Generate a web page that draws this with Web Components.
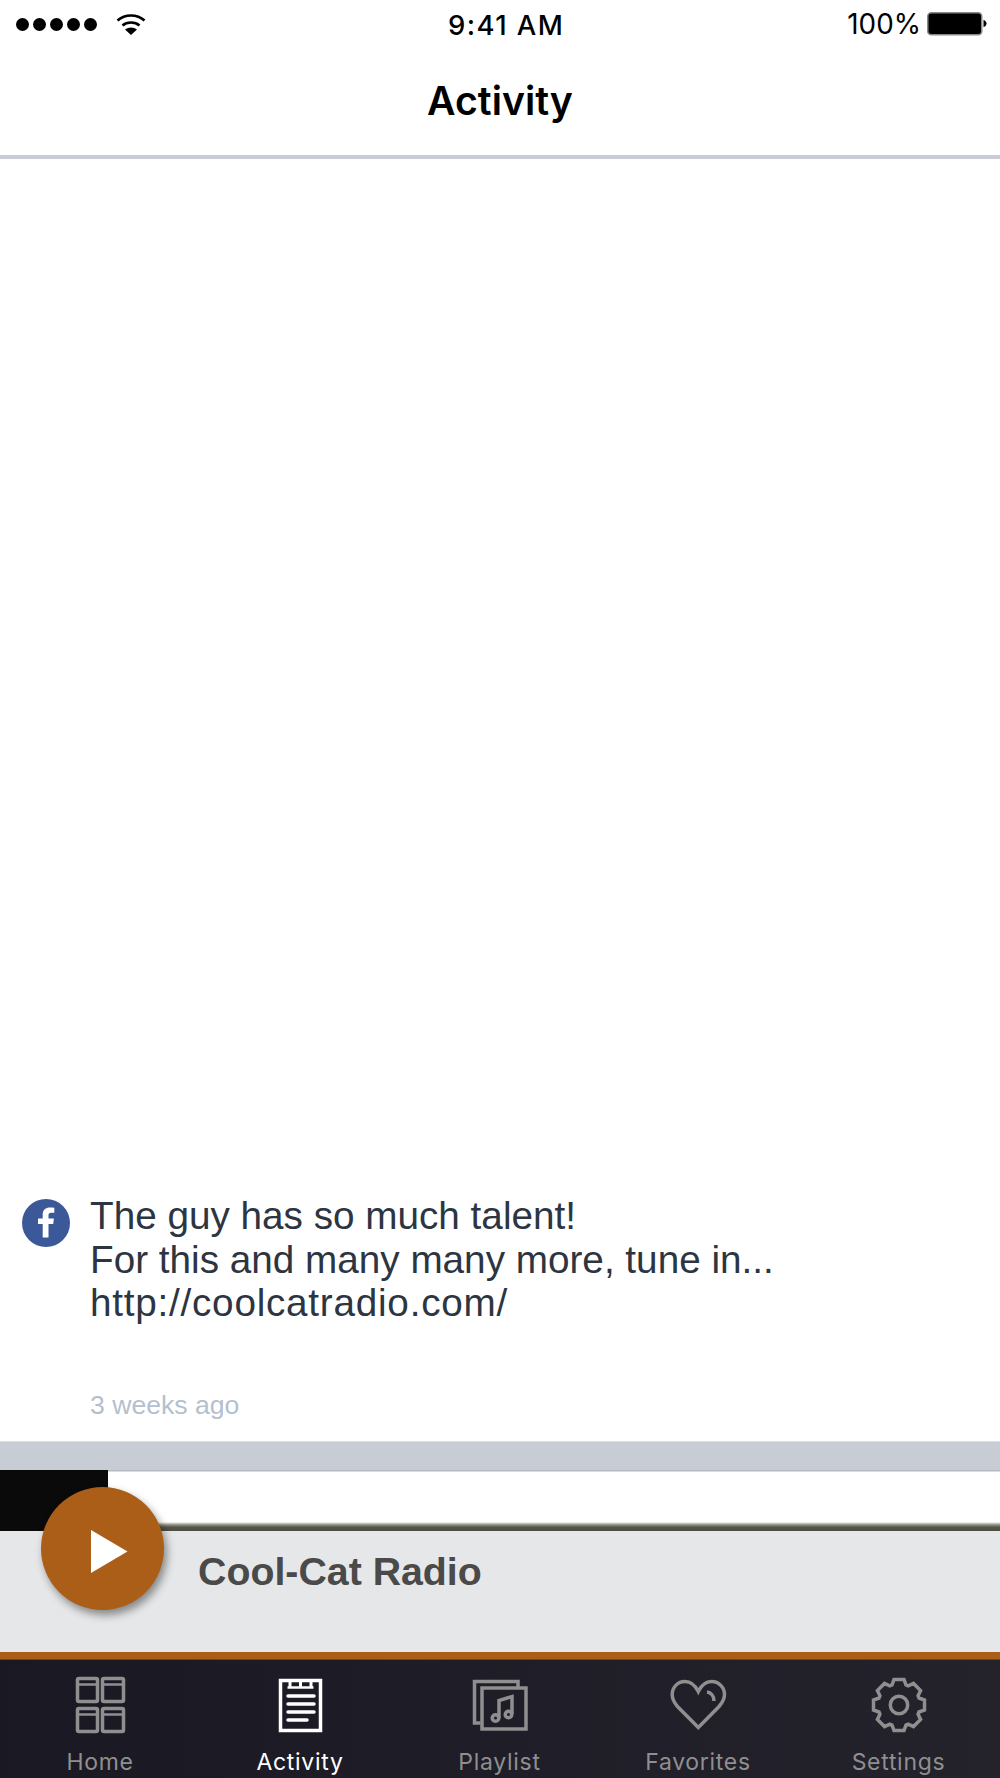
<!DOCTYPE html>
<html>
<head>
<meta charset="utf-8">
<title>Activity</title>
<style>
  html, body { margin: 0; padding: 0; background: #fff; }
  feed-post span { letter-spacing: 0.75px; }
</style>
</head>
<body>
<app-screen>
  <status-bar></status-bar>
  <nav-title>Activity</nav-title>
  <activity-feed>
    <feed-post when="3 weeks ago">The guy has so much talent!<br>For this and many many more, tune in...<br><span>http://coolcatradio.com/</span></feed-post>
  </activity-feed>
  <player-bar>Cool-Cat Radio</player-bar>
  <tab-bar>
    <tab-item icon="home">Home</tab-item>
    <tab-item icon="activity" active>Activity</tab-item>
    <tab-item icon="playlist">Playlist</tab-item>
    <tab-item icon="heart">Favorites</tab-item>
    <tab-item icon="gear">Settings</tab-item>
  </tab-bar>
</app-screen>

<script>
class AppScreen extends HTMLElement {
  constructor() {
    super();
    this.attachShadow({ mode: 'open' });
    this.shadowRoot.innerHTML = `
      <style>
        :host {
          display: flex;
          flex-direction: column;
          width: 1000px;
          height: 1778px;
          overflow: hidden;
          background: #fff;
        }
      </style>
      <slot></slot>
    `;
  }
}

class StatusBar extends HTMLElement {
  constructor() {
    super();
    this.attachShadow({ mode: 'open' });
    this.shadowRoot.innerHTML = `
      <style>
        :host {
          display: flex;
          justify-content: space-between;
          align-items: center;
          height: 48px;
          padding: 0 13px 0 16px;
          font-family: Inter, "Liberation Sans", sans-serif;
          color: #000;
        }
        .left, .right { display: flex; align-items: center; }
        .dots { display: flex; gap: 4px; }
        .dots i { width: 13px; height: 13px; border-radius: 50%; background: #000; }
        .wifi { margin-left: 19px; }
        .time { margin: 2px 0 0 19px; font-size: 27.500px; font-weight: 500; letter-spacing: 1.400px; }
        .pct { font-size: 27.800px; margin-right: 6px; }
      </style>
      <div class="left">
        <div class="dots"><i></i><i></i><i></i><i></i><i></i></div>
        <svg class="wifi" width="30" height="22" viewBox="0 0 30 22">
          <path d="M1.5 7.5C9 .8 21 .8 28.500 7.500" fill="none" stroke="#000" stroke-width="2.600"/>
          <path d="M6.500 12.500C11 8.500 19 8.500 23.500 12.500" fill="none" stroke="#000" stroke-width="2.600"/>
          <path d="M9 16.500C12.500 13.800 17.500 13.800 21 16.500L15 22Z" fill="#000"/>
        </svg>
      </div>
      <div class="time">9:41 AM</div>
      <div class="right">
        <span class="pct">100%</span>
        <svg width="60" height="24" viewBox="0 0 60 24">
          <rect x=".75" y=".75" width="54" height="22" rx="3.500" fill="#000" stroke="#8a8a8a" stroke-width="1.500"/>
          <path d="M56.500 8C58.500 8.500 59.500 10 59.500 11.500S58.500 14.500 56.500 15Z" fill="#000"/>
        </svg>
      </div>
    `;
  }
}

class NavTitle extends HTMLElement {
  constructor() {
    super();
    this.attachShadow({ mode: 'open' });
    this.shadowRoot.innerHTML = `
      <style>
        :host {
          display: flex;
          justify-content: center;
          align-items: center;
          height: 107px;
          box-sizing: content-box;
          border-bottom: 4px solid #c9ccd4;
          font: 600 39.200px Inter, "Liberation Sans", sans-serif;
          color: #000;
        }
        div { margin-top: -2px; }
      </style>
      <div><slot></slot></div>
    `;
  }
}

class ActivityFeed extends HTMLElement {
  constructor() {
    super();
    this.attachShadow({ mode: 'open' });
    this.shadowRoot.innerHTML = `
      <style>
        :host {
          flex: 1;
          display: flex;
          flex-direction: column;
          justify-content: flex-end;
          background: #fff;
        }
      </style>
      <slot></slot>
    `;
  }
}

class FeedPost extends HTMLElement {
  constructor() {
    super();
    this.attachShadow({ mode: 'open' });
    this.shadowRoot.innerHTML = `
      <style>
        :host {
          display: flex;
          gap: 20px;
          padding: 0 22px 20px 22px;
          font-family: "Liberation Sans", Arial, sans-serif;
        }
        .fb { flex: none; width: 48px; height: 48px; margin-top: 4px; }
        .text { margin-top: -1px; font-size: 38.700px; line-height: 43.700px; color: #2c3541; }
        .when { margin-top: 64px; font-size: 26.600px; line-height: 32px; color: #b4bfcf; }
      </style>
      <svg class="fb" viewBox="0 0 48 48">
        <circle cx="24" cy="24" r="24" fill="#3b5998"/>
        <path d="M26.500 38.500V25H31.200L31.900 19.500H26.500V16.300C26.500 14.700 27 13.700 29.300 13.700H32.300V8.800C31.700 8.700 30 8.500 28 8.500 23.700 8.500 20.700 11 20.700 15.700V19.500H16V25H20.700V38.500Z" fill="#fff"/>
      </svg>
      <div>
        <div class="text"><slot></slot></div>
        <div class="when"></div>
      </div>
    `;
  }

  connectedCallback() {
    this.shadowRoot.querySelector('.when').textContent = this.getAttribute('when');
  }
}

class PlayerBar extends HTMLElement {
  constructor() {
    super();
    this.attachShadow({ mode: 'open' });
    this.shadowRoot.innerHTML = `
      <style>
        :host {
          display: block;
          position: relative;
          font-family: "Liberation Sans", Arial, sans-serif;
        }
        .band {
          height: 28px;
          background: #c8ccd5;
          border-top: 1px solid #dcdee3;
        }
        .strip {
          display: flex;
          height: 61px;
          background: linear-gradient(#b6b9bd 0, #b6b9bd 1px, #fff 2px, #fff 52px, #9a9b8e 54.500px, #55574b 57px, #4b4d41 61px);
        }
        .cover { width: 108px; background: #0a0a0a; }
        .info {
          height: 121px;
          box-sizing: border-box;
          padding: 16px 0 0 198px;
          background: #e6e7e9;
          font-size: 39.300px;
          line-height: 48px;
          font-weight: bold;
          color: #4a4a4a;
        }
        .accent {
          height: 7px;
          background: #ab5e17;
          border-bottom: 1px solid #7a4210;
        }
        .play {
          position: absolute;
          left: 41px;
          top: 46px;
          width: 123px;
          height: 123px;
          border-radius: 50%;
          background: #ab5e17;
          box-shadow: 3px 5px 8px rgba(0, 0, 0, 0.42);
        }
        .play svg { display: block; }
      </style>
      <div class="band"></div>
      <div class="strip"><div class="cover"></div></div>
      <div class="info"><slot></slot></div>
      <div class="accent"></div>
      <div class="play">
        <svg width="123" height="123" viewBox="0 0 123 123">
          <path d="M50 43V86L86.500 64.500Z" fill="#fff"/>
        </svg>
      </div>
    `;
  }
}

class TabBar extends HTMLElement {
  constructor() {
    super();
    this.attachShadow({ mode: 'open' });
    this.shadowRoot.innerHTML = `
      <style>
        :host {
          display: grid;
          grid-template-columns: 200px 200px 199px 198px 203px;
          height: 118px;
          overflow: hidden;
          background: linear-gradient(90deg, #1a1923, #1e1c26 40%, #24222b);
        }
      </style>
      <slot></slot>
    `;
  }
}

function gearPath() {
  let d = '';
  for (let t = 0; t < 8; t++) {
    const a = t * Math.PI / 4;
    const pts = [[-7, -20], [-5, -25.500], [5, -25.500], [7, -20]];
    pts.forEach(([x, y]) => {
      const px = 30 + x * Math.cos(a) - y * Math.sin(a);
      const py = 30 + x * Math.sin(a) + y * Math.cos(a);
      d += (d ? 'L' : 'M') + px.toFixed(2) + ' ' + py.toFixed(2);
    });
  }
  return d + 'Z';
}

const TAB_ICONS = {
  home: `
    <rect x="7.500" y="3.500" width="20" height="23" rx="1.500"/><path d="M7.500 9.500H27.500" stroke-width="2.500"/>
    <rect x="32.500" y="3.500" width="21" height="23" rx="1.500"/><path d="M32.500 9.500H53.500" stroke-width="2.500"/>
    <rect x="7.500" y="33.500" width="20" height="23" rx="1.500"/><path d="M7.500 39.500H27.500" stroke-width="2.500"/>
    <rect x="32.500" y="33.500" width="21" height="23" rx="1.500"/><path d="M32.500 39.500H53.500" stroke-width="2.500"/>`,
  activity: `
    <rect x="10.500" y="5.500" width="40" height="50" stroke-width="3.500"/>
    <path d="M17.500 12.500H43.500" stroke-width="2.500"/>
    <path d="M20 7V12M30.500 7V12M41 7V12" stroke-width="3"/>
    <path d="M18 21H44M18 29H44M18 37H44M18 45H37" stroke-linecap="round"/>`,
  playlist: `
    <path d="M10.500 48H4.500V6.500H48V12"/>
    <rect x="12" y="13" width="44" height="41"/>
    <circle cx="25.500" cy="43" r="3.300"/>
    <circle cx="38.500" cy="39.500" r="3.300"/>
    <path d="M29 43V25.500L42 21.500V39"/>`,
  heart: `
    <path d="M30.300 16.500C27 10 22 6.500 17 6.500 9.500 6.500 4.200 12.500 4.200 19.500 4.200 24.500 6.500 28 9.500 31.500L30.300 52.500 51 31.500C54 28 56.500 24.500 56.500 19.500 56.500 12.500 51 6.500 43.500 6.500 38.500 6.500 33.500 10 30.300 16.500Z"/>
    <path d="M39 17C43 17.500 46 21 46 26"/>`,
  gear: `
    <path d="${gearPath()}"/>
    <circle cx="30" cy="30" r="8.700"/>`,
};

class TabItem extends HTMLElement {
  constructor() {
    super();
    this.attachShadow({ mode: 'open' });
  }

  connectedCallback() {
    const active = this.hasAttribute('active');
    const color = active ? '#fff' : '#8f8f8f';
    this.shadowRoot.innerHTML = `
      <style>
        :host {
          display: flex;
          flex-direction: column;
          align-items: center;
          padding-top: 15px;
          font: 400 23px Inter, "Liberation Sans", sans-serif;
          letter-spacing: 0.7px;
          color: ${color};
        }
        svg { display: block; }
        .label { margin-top: 12px; line-height: 30px; }
      </style>
      <svg width="60" height="60" viewBox="0 0 60 60" fill="none" stroke="${color}" stroke-width="3.500">
        ${TAB_ICONS[this.getAttribute('icon')]}
      </svg>
      <div class="label"><slot></slot></div>
    `;
  }
}

customElements.define('app-screen', AppScreen);
customElements.define('status-bar', StatusBar);
customElements.define('nav-title', NavTitle);
customElements.define('activity-feed', ActivityFeed);
customElements.define('feed-post', FeedPost);
customElements.define('player-bar', PlayerBar);
customElements.define('tab-bar', TabBar);
customElements.define('tab-item', TabItem);
</script>
</body>
</html>
